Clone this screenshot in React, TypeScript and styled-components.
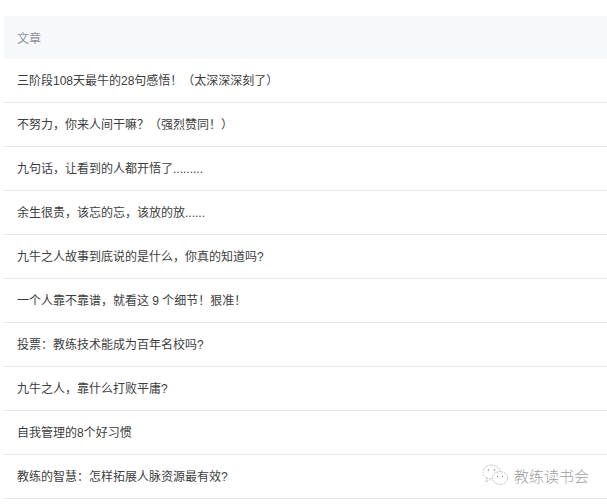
import styled, { createGlobalStyle } from "styled-components";

const articles = [
  "三阶段108天最牛的28句感悟！（太深深深刻了）",
  "不努力，你来人间干嘛？（强烈赞同！）",
  "九句话，让看到的人都开悟了.........",
  "余生很贵，该忘的忘，该放的放......",
  "九牛之人故事到底说的是什么，你真的知道吗?",
  "一个人靠不靠谱，就看这 9 个细节！狠准！",
  "投票：教练技术能成为百年名校吗?",
  "九牛之人，靠什么打败平庸?",
  "自我管理的8个好习惯",
  "教练的智慧：怎样拓展人脉资源最有效?",
];

const Global = createGlobalStyle`
  html, body {
    margin: 0;
    height: 504px;
    overflow: hidden;
    background: #fff;
  }
`;

export default function App() {
  return (
    <Page>
      <Global />
      <Table>
        <HeadRow>文章</HeadRow>
        {articles.map((title) => (
          <Row key={title}>{title}</Row>
        ))}
      </Table>
      <Watermark>
        <svg width="27" height="22" viewBox="0 0 27 22" fill="none" stroke="#a9a9a9" strokeWidth="0.8" strokeDasharray="1.6 1">
          <ellipse cx="9.5" cy="8" rx="8.5" ry="7" />
          <path d="M5 14l-1 4 4-2.4" />
          <ellipse cx="18" cy="14" rx="7.5" ry="6.4" fill="#fff" />
          <circle cx="6.5" cy="6" r="0.8" fill="#8a8a8a" stroke="none" />
          <circle cx="12.5" cy="6" r="0.8" fill="#8a8a8a" stroke="none" />
          <circle cx="15.5" cy="12.5" r="0.7" fill="#8a8a8a" stroke="none" />
          <circle cx="20.5" cy="12.5" r="0.7" fill="#8a8a8a" stroke="none" />
        </svg>
        <WatermarkText>教练读书会</WatermarkText>
      </Watermark>
    </Page>
  );
}

const Page = styled.div`
  position: relative;
  height: 504px;
  padding: 16px 0 0 4px;
  box-sizing: border-box;
  overflow: hidden;
  font-family: "Liberation Sans", "Noto Sans CJK SC", sans-serif;
`;

const Table = styled.div`
  display: flex;
  flex-direction: column;
`;

const HeadRow = styled.div`
  height: 43px;
  padding-left: 13px;
  display: flex;
  align-items: center;
  background: #f7f8fa;
  color: #909399;
  font-size: 12px;
`;

const Row = styled.div`
  height: 44px;
  box-sizing: border-box;
  padding: 0 0 2px 13px;
  display: flex;
  align-items: center;
  flex-shrink: 0;
  border-bottom: 1px solid #e8e8e8;
  color: #3d3d3d;
  font-size: 12px;
  white-space: pre;
`;

const Watermark = styled.div`
  position: absolute;
  right: 18px;
  top: 464px;
  display: flex;
  align-items: center;
  gap: 5px;
`;

const WatermarkText = styled.span`
  color: #a0a0a0;
  font-size: 15px;
  font-weight: 300;
`;
